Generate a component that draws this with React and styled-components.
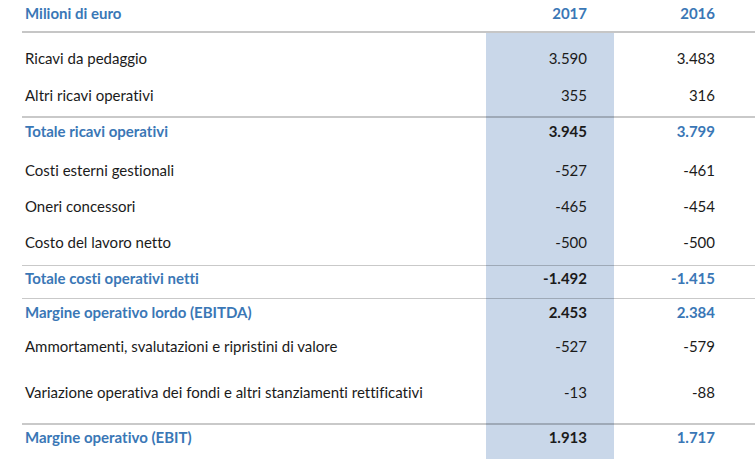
import React from "react";
import styled, { createGlobalStyle } from "styled-components";

const GlobalStyle = createGlobalStyle`
  html, body {
    margin: 0;
    padding: 0;
    background: #ffffff;
  }
  body {
    font-family: Lato, "Open Sans", sans-serif;
    font-variant-ligatures: none;
    overflow: hidden;
  }
`;

const rows = [
  { label: "Ricavi da pedaggio", a: "3.590", b: "3.483", h: 44, pt: 6, pb: 0, rule: 0 },
  { label: "Altri ricavi operativi", a: "355", b: "316", h: 39, pt: 0, pb: 3, rule: 0 },
  { label: "Totale ricavi operativi", a: "3.945", b: "3.799", h: 35, pt: 0, pb: 7, rule: 2, total: true },
  { label: "Costi esterni gestionali", a: "-527", b: "-461", h: 37, pt: 0, pb: 0, rule: 0 },
  { label: "Oneri concessori", a: "-465", b: "-454", h: 36, pt: 0, pb: 0, rule: 0 },
  { label: "Costo del lavoro netto", a: "-500", b: "-500", h: 41, pt: 0, pb: 5, rule: 0 },
  { label: "Totale costi operativi netti", a: "-1.492", b: "-1.415", h: 33, pt: 0, pb: 8, rule: 1, total: true },
  { label: "Margine operativo lordo (EBITDA)", a: "2.453", b: "2.384", h: 31, pt: 0, pb: 4, rule: 1, total: true },
  { label: "Ammortamenti, svalutazioni e ripristini di valore", a: "-527", b: "-579", h: 34, pt: 0, pb: 0, rule: 0 },
  { label: "Variazione operativa dei fondi e altri stanziamenti rettificativi", a: "-13", b: "-88", h: 60, pt: 0, pb: 2, rule: 0 },
  { label: "Margine operativo (EBIT)", a: "1.913", b: "1.717", h: 36, pt: 0, pb: 10, rule: 2, total: true },
];

const App = () => {
  return (
    <>
      <GlobalStyle />
      <Table>
        <HeadRow>
          <HeadCell>Milioni di euro</HeadCell>
          <HeadCell $num>2017</HeadCell>
          <HeadCell $num>2016</HeadCell>
          <HeadCell />
        </HeadRow>
        {rows.map((r) => (
          <Row key={r.label} $h={r.h} $pt={r.pt} $pb={r.pb} $rule={r.rule}>
            <Label $total={r.total}>{r.label}</Label>
            <Value $hl $total={r.total}>{r.a}</Value>
            <Value $total={r.total} $blue={r.total}>{r.b}</Value>
            <Filler />
          </Row>
        ))}
      </Table>
    </>
  );
};

const Table = styled.div`
  display: flex;
  flex-direction: column;
  margin-left: 22px;
  width: 733px;
`;

const Grid = styled.div`
  display: grid;
  grid-template-columns: 464px 128px 128px 1fr;
`;

const HeadRow = styled(Grid)`
  height: 33px;
  border-bottom: 2px solid #c6c6c6;
  box-sizing: border-box;
`;

const HeadCell = styled.div`
  display: flex;
  align-items: center;
  justify-content: ${(p) => (p.$num ? "flex-end" : "flex-start")};
  height: 26px;
  padding: ${(p) => (p.$num ? "0 27px 0 0" : "0 0 0 3px")};
  font-size: 15px;
  font-weight: 700;
  color: #3a77b6;
`;

const Row = styled(Grid)`
  height: ${(p) => p.$h}px;

  & > * {
    box-sizing: border-box;
    display: flex;
    align-items: center;
    padding-top: ${(p) => p.$pt}px;
    padding-bottom: ${(p) => p.$pb}px;
    border-top: ${(p) => (p.$rule ? `${p.$rule}px solid rgba(0, 0, 0, 0.21)` : "none")};
  }
`;

const Label = styled.div`
  padding-left: 3px;
  font-size: 15px;
  font-weight: ${(p) => (p.$total ? 700 : 400)};
  color: ${(p) => (p.$total ? "#3a77b6" : "#1b1b1b")};
  white-space: nowrap;
`;

const Value = styled.div`
  justify-content: flex-end;
  padding-right: 27px;
  font-size: 15px;
  font-weight: ${(p) => (p.$total ? 700 : 400)};
  color: ${(p) => (p.$blue ? "#3a77b6" : "#1b1b1b")};
  background: ${(p) => (p.$hl ? "#c9d7e9" : "transparent")};
`;

const Filler = styled.div``;

export default App;
